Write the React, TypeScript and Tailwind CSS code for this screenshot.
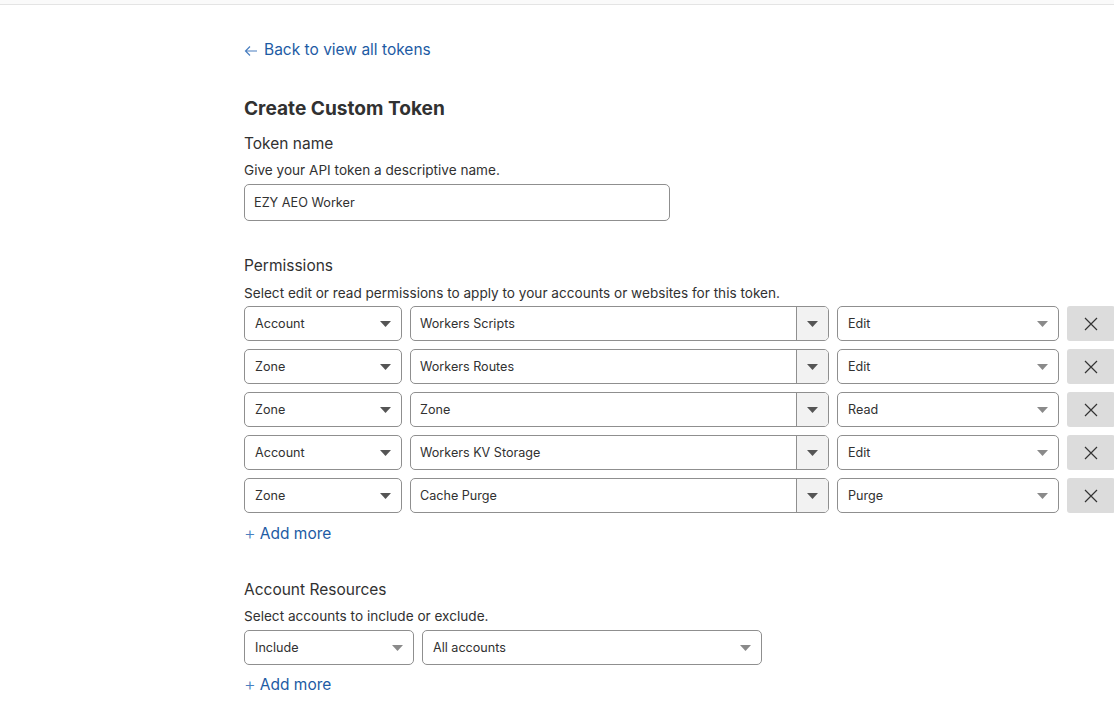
import React from "react";

const font = { fontFamily: "'Segoe UI', Inter, 'Noto Sans', sans-serif" };

function Caret({ light }: { light?: boolean }) {
  return (
    <svg width="11" height="6" viewBox="0 0 11 6" className="shrink-0">
      <path d="M0 0 L11 0 L5.5 6 Z" fill={light ? "#8a8a8a" : "#555555"} />
    </svg>
  );
}

function Select({ label, w, light, h = "h-[35px]" }: { label: string; w: string; light?: boolean; h?: string }) {
  return (
    <div className={`${w} ${h} shrink-0 flex items-center justify-between rounded-[5px] border border-[#8f8f8f] bg-white pl-[10px] pr-[10px] text-[12.6px] text-[#313131]`}>
      <span className="pt-[2px]">{label}</span>
      <Caret light={light} />
    </div>
  );
}

function Combo({ label }: { label: string }) {
  return (
    <div className="w-[419px] h-[35px] shrink-0 flex items-stretch rounded-[5px] border border-[#8f8f8f] bg-white overflow-hidden text-[12.6px] text-[#313131]">
      <div className="flex-1 flex items-center pl-[9px] pt-[2px]">{label}</div>
      <div className="w-[32px] flex items-center justify-center border-l border-[#8f8f8f] bg-[#f2f2f2]">
        <Caret />
      </div>
    </div>
  );
}

function XButton() {
  return (
    <div className="w-[48px] h-[35px] shrink-0 flex items-center justify-center rounded-[3px] bg-[#dcdcdc]">
      <svg width="14" height="14" viewBox="0 0 14 14">
        <path d="M1 1 L13 13 M13 1 L1 13" stroke="#333" strokeWidth="1.2" />
      </svg>
    </div>
  );
}

const rows = [
  ["Account", "Workers Scripts", "Edit"],
  ["Zone", "Workers Routes", "Edit"],
  ["Zone", "Zone", "Read"],
  ["Account", "Workers KV Storage", "Edit"],
  ["Zone", "Cache Purge", "Purge"],
];

function AddMore() {
  return (
    <div className="flex items-center text-[15.5px] text-[#1d5ba4] leading-[20px]">
      <span className="text-[18px] font-light mr-[4px] text-[#4a7fc0]">+</span>
      <span>Add more</span>
    </div>
  );
}

export default function App() {
  return (
    <div className="w-[1114px] h-[719px] bg-white overflow-hidden text-[#313131]" style={font}>
      <div className="h-[5px] border-b border-[#e4e4e4] bg-[#fafafa]" />
      <div className="pl-[244px] overflow-hidden">
        <div className="mt-[35px] flex items-center text-[15.5px] leading-[20px] text-[#1d5ba4]">
          <svg width="14" height="12" viewBox="0 0 14 12" className="mr-[6px] mt-[2px]">
            <path d="M13 6 H1.5 M6 1.5 L1.5 6 L6 10.5" stroke="#4a7fc0" strokeWidth="1.2" fill="none" />
          </svg>
          <span>Back to view all tokens</span>
        </div>

        <h1 className="mt-[36px] text-[19.1px] leading-[24px] font-bold text-[#313131]">Create Custom Token</h1>
        <div className="mt-[14px] text-[15.5px] leading-[20px]">Token name</div>
        <div className="mt-[7px] text-[13.6px] leading-[18px]">Give your API token a descriptive name.</div>
        <div className="mt-[5px] w-[426px] h-[37px] rounded-[5px] border border-[#8f8f8f] flex items-center pl-[9px] pt-[1px] text-[12.7px]">
          EZY AEO Worker
        </div>

        <div className="mt-[35px] text-[15.5px] leading-[20px]">Permissions</div>
        <div className="mt-[8px] text-[13.6px] leading-[18px]">
          Select edit or read permissions to apply to your accounts or websites for this token.
        </div>
        <div className="mt-[4px] flex flex-col gap-[8px]">
          {rows.map((r, i) => (
            <div key={i} className="flex gap-[8px]">
              <Select label={r[0]} w="w-[158px]" />
              <Combo label={r[1]} />
              <Select label={r[2]} w="w-[222px]" light />
              <XButton />
            </div>
          ))}
        </div>
        <div className="mt-[11px]">
          <AddMore />
        </div>

        <div className="mt-[36px] text-[15.5px] leading-[20px]">Account Resources</div>
        <div className="mt-[7px] text-[13.6px] leading-[18px]">Select accounts to include or exclude.</div>
        <div className="mt-[5px] flex gap-[8px]">
          <Select label="Include" w="w-[170px]" light h="h-[35px]" />
          <Select label="All accounts" w="w-[340px]" light h="h-[35px]" />
        </div>
        <div className="mt-[10px]">
          <AddMore />
        </div>
      </div>
    </div>
  );
}
